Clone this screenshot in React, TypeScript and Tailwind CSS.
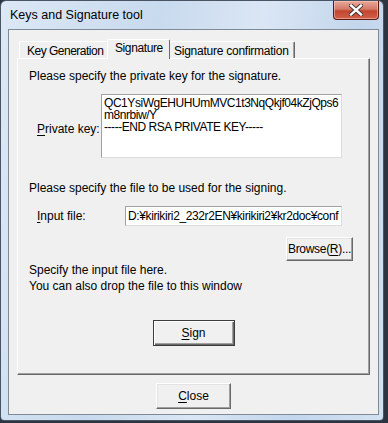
import React from 'react';

const ui = "font-['Liberation_Sans',Arial,sans-serif] text-[12px] text-black";

const Btn: React.FC<{ className?: string; main?: boolean; children: React.ReactNode }> = ({ className = '', main, children }) => (
  <div
    className={`flex items-center justify-center bg-[#f0f0f0] leading-none ${
      main
        ? 'border border-[#3c3c3c] shadow-[inset_1px_1px_0_#ffffff,inset_-1px_-1px_0_#696969,inset_-2px_-2px_0_#a0a0a0]'
        : 'border-t border-l border-t-white border-l-white border-r border-b border-r-[#696969] border-b-[#696969] shadow-[inset_-1px_-1px_0_#a0a0a0,inset_1px_1px_0_#e3e3e3]'
    } ${className}`}
  >
    {children}
  </div>
);

export default function App() {
  return (
    <div className={`w-[388px] h-[423px] bg-[#2b3440] overflow-hidden ${ui}`}>
      <div className="w-[384px] h-[421px] flex flex-col rounded-t-[6px] rounded-b-[4px] border border-[#4a5563] bg-[linear-gradient(100deg,#dce8f5_0%,#c8daee_35%,#dae6f4_58%,#c3d6ec_80%,#d3e2f2_100%)]">
        {/* title bar */}
        <div className="h-[28px] flex items-start justify-between">
          <div className="pl-[9px] pt-[8px] text-[12.5px] leading-none">Keys and Signature tool</div>
          <div className="mr-[4px] w-[46px] h-[19px] rounded-b-[4px] border border-t-0 border-[#5a1a14] bg-[linear-gradient(180deg,#e9a89a_0%,#d47a68_45%,#c24530_55%,#d2614a_100%)] flex items-center justify-center shadow-[inset_0_0_0_1px_rgba(255,210,200,0.5)]">
            <svg width="14" height="12" viewBox="0 0 14 12">
              <path d="M2 1.5 L12 10.5 M12 1.5 L2 10.5" stroke="#3a2a2a" strokeWidth="4.2" strokeLinecap="square" />
              <path d="M2 1.5 L12 10.5 M12 1.5 L2 10.5" stroke="#ffffff" strokeWidth="2.4" strokeLinecap="square" />
            </svg>
          </div>
        </div>

        {/* client area */}
        <div className="mx-[7px] mr-[4px] h-[386px] bg-[#f0f0f0] border border-[#7f8a97] flex flex-col px-[8px] pt-[9px]">
          {/* tabs */}
          <div className="flex items-end pl-[2px] h-[19px] relative z-10 whitespace-nowrap">
            <div className="flex-none h-[17px] w-[89px] border-t border-l border-white border-r border-r-[#696969] rounded-t-[2px] pl-[7px] pt-[2px] leading-[14px] tracking-[-0.5px]">
              Key Generation
            </div>
            <div className="flex-none h-[20px] -mb-[1px] w-[63px] border-t border-l border-white border-r border-r-[#696969] rounded-t-[2px] bg-[#f0f0f0] pl-[7px] pt-[1px] leading-[14px] tracking-[-0.4px] -ml-px">
              Signature
            </div>
            <div className="flex-none h-[17px] w-[125px] border-t border-white border-r border-r-[#696969] shadow-[inset_-1px_0_0_#a0a0a0] rounded-t-[2px] pl-[4px] pt-[2px] leading-[14px] tracking-[-0.25px]">
              Signature confirmation
            </div>
          </div>

          {/* panel */}
          <div className="h-[317px] border-t border-l border-white border-r border-b border-r-[#696969] border-b-[#696969] shadow-[inset_-1px_-1px_0_#a0a0a0] flex flex-col pl-[11px] pt-[10px]">
            <div className="leading-[14px]">Please specify the private key for the signature.</div>

            <div className="mt-[11px] flex items-center">
              <div className="w-[72px] pl-[8px] pt-[6px]">
                <span className="underline underline-offset-2">P</span>rivate key:
              </div>
              <div className="w-[241px] h-[64px] bg-white border-t border-l border-[#a0a0a0] border-r border-b border-r-[#dcdcdc] border-b-[#dcdcdc] pl-[2px] pt-[2px] leading-[12px] tracking-[-0.45px] whitespace-pre">
                {'QC1YsiWgEHUHUmMVC1t3NqQkjf04kZjQps6\nm8nrbiw/Y\n-----END RSA PRIVATE KEY-----'}
              </div>
            </div>

            <div className="mt-[23px] leading-[14px]">Please specify the file to be used for the signing.</div>

            <div className="mt-[11px] flex items-center">
              <div className="w-[96px] pl-[8px]">
                <span className="underline underline-offset-2">I</span>nput file:
              </div>
              <div className="w-[217px] h-[20px] bg-white border-t border-l border-[#a0a0a0] border-r border-b border-r-[#dcdcdc] border-b-[#dcdcdc] pl-[2px] leading-[18px] tracking-[-0.38px] whitespace-nowrap overflow-hidden">
                D:¥kirikiri2_232r2EN¥kirikiri2¥kr2doc¥conf
              </div>
            </div>

            <div className="mt-[11px] flex justify-end pr-[16px]">
              <Btn className="w-[67px] h-[24px] tracking-[-0.3px]">
                Browse(<span className="underline underline-offset-2">R</span>)...
              </Btn>
            </div>

            <div className="mt-[1px] leading-[16px]">
              <div>Specify the input file here.</div>
              <div>You can also drop the file to this window</div>
            </div>

            <div className="mt-[26px] flex justify-center pr-[11px]">
              <Btn main className="w-[82px] h-[26px]">
                <span className="underline underline-offset-2">S</span>ign
              </Btn>
            </div>
          </div>

          <div className="mt-[8px] flex justify-center">
            <Btn className="w-[75px] h-[26px]">
              <span className="underline underline-offset-2">C</span>lose
            </Btn>
          </div>
        </div>
      </div>
    </div>
  );
}
